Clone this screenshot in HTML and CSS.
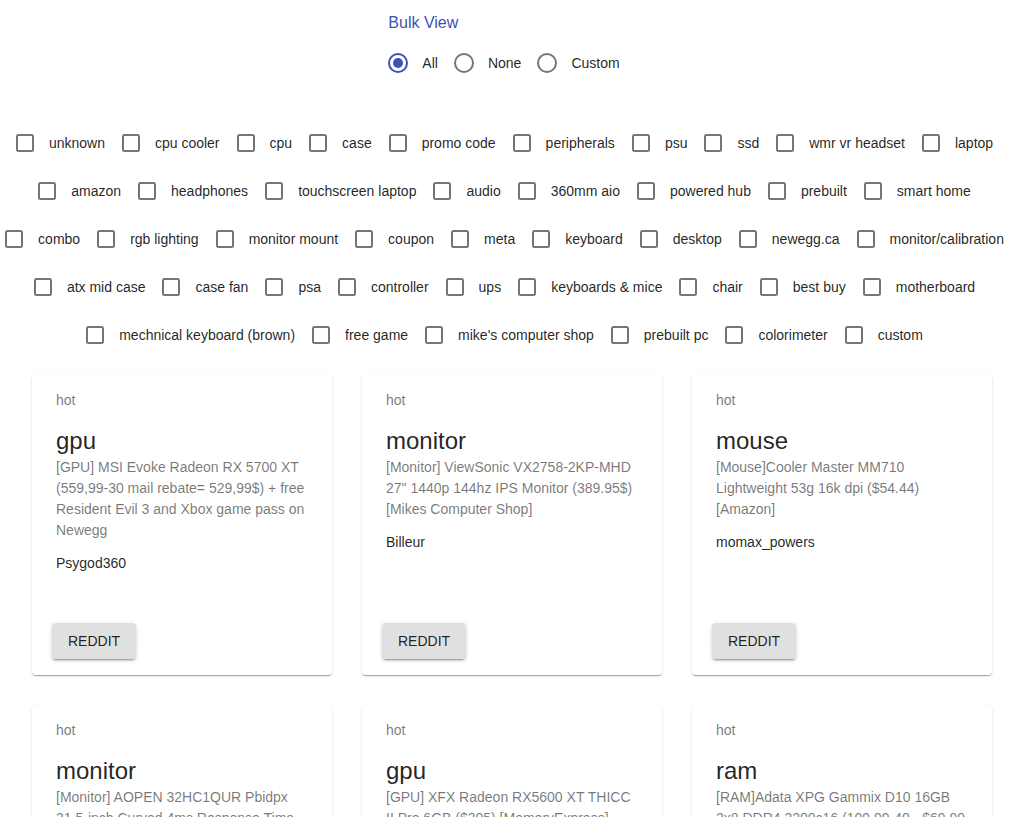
FILE: index.html
```html
<!DOCTYPE html>
<html lang="en">
<head>
<meta charset="utf-8">
<title>Deals</title>
<link rel="stylesheet" href="styles.css">
</head>
<body>
<main class="page">
  <section class="bulk">
    <fieldset class="bulk-form">
      <legend class="bulk-legend">Bulk View</legend>
      <div class="radio-group">
        <label class="choice">
          <span class="ctrl radio checked"><svg viewBox="0 0 24 24" width="24" height="24"><circle cx="12" cy="12" r="9" fill="none" stroke="currentColor" stroke-width="2"/><circle cx="12" cy="12" r="5" fill="currentColor"/></svg></span>
          <span class="choice-text">All</span>
        </label>
        <label class="choice">
          <span class="ctrl radio"><svg viewBox="0 0 24 24" width="24" height="24"><circle cx="12" cy="12" r="9" fill="none" stroke="currentColor" stroke-width="2"/></svg></span>
          <span class="choice-text">None</span>
        </label>
        <label class="choice">
          <span class="ctrl radio"><svg viewBox="0 0 24 24" width="24" height="24"><circle cx="12" cy="12" r="9" fill="none" stroke="currentColor" stroke-width="2"/></svg></span>
          <span class="choice-text">Custom</span>
        </label>
      </div>
    </fieldset>
  </section>

  <section class="filters" id="filters"></section>

  <section class="cards" id="cards"></section>
</main>
<script src="app.js"></script>
</body>
</html>
```

FILE: app.js
```js
const rows = [
  ["unknown", "cpu cooler", "cpu", "case", "promo code", "peripherals", "psu", "ssd", "wmr vr headset", "laptop"],
  ["amazon", "headphones", "touchscreen laptop", "audio", "360mm aio", "powered hub", "prebuilt", "smart home"],
  ["combo", "rgb lighting", "monitor mount", "coupon", "meta", "keyboard", "desktop", "newegg.ca", "monitor/calibration"],
  ["atx mid case", "case fan", "psa", "controller", "ups", "keyboards & mice", "chair", "best buy", "motherboard"],
  ["mechnical keyboard (brown)", "free game", "mike's computer shop", "prebuilt pc", "colorimeter", "custom"]
];

const box = '<svg viewBox="0 0 24 24" width="24" height="24"><rect x="4" y="4" width="16" height="16" rx="1.5" fill="none" stroke="currentColor" stroke-width="2"/></svg>';

const filters = document.getElementById("filters");
rows.forEach(function (row) {
  const div = document.createElement("div");
  div.className = "filter-row";
  row.forEach(function (name) {
    const label = document.createElement("label");
    label.className = "choice";
    label.innerHTML = '<span class="ctrl checkbox">' + box + '</span><span class="choice-text"></span>';
    label.querySelector(".choice-text").textContent = name;
    div.appendChild(label);
  });
  filters.appendChild(div);
});

const deals = [
  { title: "gpu", desc: "[GPU] MSI Evoke Radeon RX 5700 XT (559,99-30 mail rebate= 529,99$) + free Resident Evil 3 and Xbox game pass on Newegg", author: "Psygod360" },
  { title: "monitor", desc: "[Monitor] ViewSonic VX2758-2KP-MHD 27\" 1440p 144hz IPS Monitor (389.95$) [Mikes Computer Shop]", author: "Billeur" },
  { title: "mouse", desc: "[Mouse]Cooler Master MM710 Lightweight 53g 16k dpi ($54.44) [Amazon]", author: "momax_powers" },
  { title: "monitor", desc: "[Monitor] AOPEN 32HC1QUR Pbidpx 31.5-inch Curved 4ms Response Time Monitor ($299.99) [Amazon]", author: "deal_hunter" },
  { title: "gpu", desc: "[GPU] XFX Radeon RX5600 XT THICC II Pro 6GB ($305) [MemoryExpress]", author: "canuck_pc" },
  { title: "ram", desc: "[RAM]Adata XPG Gammix D10 16GB 2x8 DDR4 3200c16 (109.99-40 - $69.99 after rebate) [Newegg]", author: "ramfan" }
];

const cards = document.getElementById("cards");
deals.forEach(function (d) {
  const card = document.createElement("article");
  card.className = "card";
  card.innerHTML =
    '<div class="card-content">' +
      '<p class="card-tag">hot</p>' +
      '<h2 class="card-title"></h2>' +
      '<p class="card-desc"></p>' +
      '<p class="card-author"></p>' +
    '</div>' +
    '<div class="card-actions"><button class="btn" type="button">Reddit</button></div>';
  card.querySelector(".card-title").textContent = d.title;
  card.querySelector(".card-desc").textContent = d.desc;
  card.querySelector(".card-author").textContent = d.author;
  cards.appendChild(card);
});
```

FILE: styles.css
```css
* { box-sizing: border-box; }

html, body {
  margin: 0;
  background: #fff;
}

body {
  font-family: "Liberation Sans", Arial, sans-serif;
  color: rgba(0, 0, 0, 0.87);
}

.page {
  padding-left: 7px;
  padding-top: 13px;
}

.bulk {
  display: flex;
  justify-content: center;
}

.bulk-form {
  border: 0;
  margin: 0;
  padding: 0;
  display: flex;
  flex-direction: column;
}

.bulk-legend {
  padding: 0;
  font-size: 16px;
  line-height: 20px;
  color: #3f51b5;
  float: left;
  margin-bottom: 9px;
}

.radio-group {
  display: flex;
  clear: both;
}

.choice {
  display: inline-flex;
  align-items: center;
  margin-left: -11px;
  margin-right: 16px;
  flex: none;
  cursor: pointer;
}

.ctrl {
  display: flex;
  padding: 9px;
  color: rgba(0, 0, 0, 0.54);
}

.ctrl svg { display: block; }

.radio.checked { color: #3f51b5; }

.choice-text {
  font-size: 14px;
  line-height: 20px;
  padding-left: 3px;
  white-space: nowrap;
}

.filters {
  margin-top: 35px;
  display: flex;
  flex-direction: column;
}

.filter-row {
  display: flex;
  justify-content: center;
  height: 48px;
  align-items: center;
}

.cards {
  margin-top: 16px;
  display: grid;
  grid-template-columns: repeat(3, 300px);
  gap: 30px;
  justify-content: center;
  padding-bottom: 30px;
}

.card {
  height: 300px;
  background: #fff;
  border-radius: 4px;
  box-shadow: 0 2px 1px -1px rgba(0, 0, 0, 0.2), 0 1px 1px 0 rgba(0, 0, 0, 0.14), 0 1px 3px 0 rgba(0, 0, 0, 0.12);
  display: flex;
  flex-direction: column;
}

.card-content {
  flex: 1;
  padding: 15px 24px 0;
}

.card-tag {
  margin: 0;
  font-size: 14px;
  line-height: 20px;
  color: rgba(0, 0, 0, 0.54);
}

.card-title {
  margin: 15px 0 0;
  font-size: 24px;
  line-height: 32px;
  font-weight: 400;
  color: rgba(0, 0, 0, 0.87);
}

.card-desc {
  margin: 0;
  font-size: 14px;
  line-height: 21px;
  color: rgba(0, 0, 0, 0.54);
}

.card-author {
  margin: 12px 0 0;
  font-size: 14px;
  line-height: 20px;
  color: rgba(0, 0, 0, 0.87);
}

.card-actions {
  padding: 0 20px 16px;
  display: flex;
}

.btn {
  font-family: inherit;
  font-size: 14px;
  line-height: 24px;
  text-transform: uppercase;
  padding: 6px 16px;
  min-width: 64px;
  border: 0;
  border-radius: 4px;
  background: #e0e0e0;
  color: rgba(0, 0, 0, 0.87);
  box-shadow: 0 3px 1px -2px rgba(0, 0, 0, 0.2), 0 2px 2px 0 rgba(0, 0, 0, 0.14), 0 1px 5px 0 rgba(0, 0, 0, 0.12);
  cursor: pointer;
}
```
